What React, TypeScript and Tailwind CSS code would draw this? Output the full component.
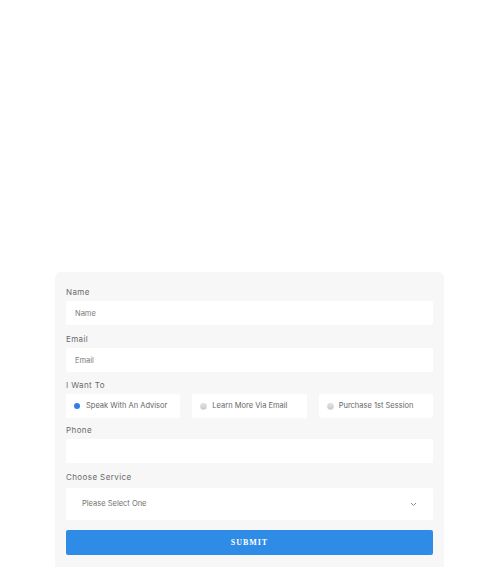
import React from 'react';

const labelCls = 'block h-[12px] text-[8px] leading-[12px] tracking-[0.05em] text-[#6a6a6a] mb-[3px]';
const inputCls =
  'block w-full h-[24px] bg-white rounded-[2px] px-[9px] text-[7.5px] text-[#666] placeholder:text-[#7a7a7a] outline-none';

const Radio: React.FC<{ label: string; checked?: boolean }> = ({ label, checked }) => (
  <label className="flex items-center h-[24px] bg-white rounded-[2px] pl-[8px] text-[7.5px] text-[#666]">
    {checked ? (
      <span className="w-[6px] h-[6px] rounded-full bg-[#2f7fe8] mr-[6px]"></span>
    ) : (
      <span className="w-[7px] h-[7px] rounded-full bg-gradient-to-b from-[#e6e6e6] to-[#c9c9c9] border border-[#d2d2d2] mr-[5px]"></span>
    )}
    {label}
  </label>
);

const App: React.FC = () => {
  return (
    <div className="w-[500px] h-[567px] bg-white overflow-hidden font-['Inter',sans-serif]">
      <div className="pt-[272px] px-[55px]">
        <form className="w-[389px] bg-[#f7f7f7] rounded-[6px] px-[11px] pt-[14px] pb-[20px]">
          <div className="mb-[8px]">
            <label className={labelCls}>Name</label>
            <input className={inputCls} placeholder="Name" />
          </div>
          <div className="mb-[7px]">
            <label className={labelCls}>Email</label>
            <input className={inputCls} placeholder="Email" />
          </div>
          <div className="mb-[6px]">
            <label className={labelCls}>I Want To</label>
            <div className="grid grid-cols-3 gap-[12px]">
              <Radio label="Speak With An Advisor" checked />
              <Radio label="Learn More Via Email" />
              <Radio label="Purchase 1st Session" />
            </div>
          </div>
          <div className="mb-[8px]">
            <label className={labelCls}>Phone</label>
            <input className={inputCls} />
          </div>
          <div className="mb-[10px]">
            <label className="block h-[12px] text-[8px] leading-[12px] tracking-[0.05em] text-[#6a6a6a] mb-[5px]">
              Choose Service
            </label>
            <div className="flex items-center justify-between h-[32px] bg-white rounded-[2px] pl-[16px] pr-[16px] text-[7.5px] text-[#707070]">
              <span>Please Select One</span>
              <svg width="7" height="5" viewBox="0 0 7 5" fill="none">
                <path d="M1 1l2.5 2.5L6 1" stroke="#888" strokeWidth="1" />
              </svg>
            </div>
          </div>
          <button
            type="button"
            className="block w-full h-[25px] bg-[#2e8be6] rounded-[2px] text-white text-[8px] font-bold tracking-[0.12em] font-['Liberation_Serif',serif]"
          >
            SUBMIT
          </button>
        </form>
      </div>
    </div>
  );
};

export default App;
